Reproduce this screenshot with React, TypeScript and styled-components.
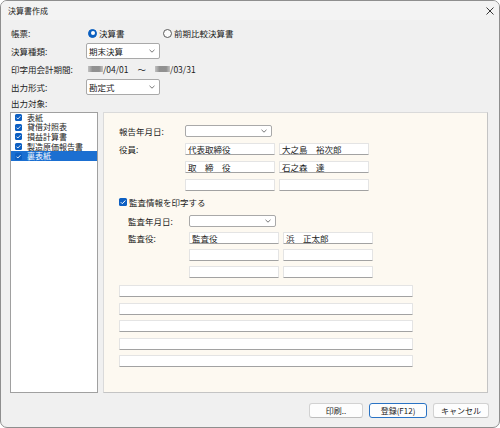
import React from "react";
import styled, { createGlobalStyle } from "styled-components";

const GlobalStyle = createGlobalStyle`
  html, body {
    margin: 0;
    padding: 0;
    background: #ffffff;
  }
  body {
    font-family: "Noto Sans CJK JP", "Noto Sans", sans-serif;
  }
`;

const Window = styled.div`
  width: 500px;
  height: 428px;
  box-sizing: border-box;
  border: 1px solid #8e8e8e;
  border-radius: 7px;
  overflow: hidden;
  background: #f0f0f0;
  color: #1b1b1b;
  font-size: 8.5px;
  line-height: 1;
  display: flex;
  flex-direction: column;
`;

const TitleBar = styled.div`
  height: 19px;
  flex-shrink: 0;
  background: #f3f3f3;
  display: flex;
  align-items: center;
  justify-content: space-between;
  padding: 0 5px 0 7px;
`;

const Title = styled.span`
  font-size: 8px;
  color: #222;
`;

const Body = styled.div`
  flex: 1;
  display: flex;
  flex-direction: column;
  padding: 5px 10px 0 9px;
`;

const FormStack = styled.div`
  display: flex;
  flex-direction: column;
  gap: 2px;
`;

const FormRow = styled.div<{ $h: number }>`
  height: ${(p) => p.$h}px;
  display: flex;
  align-items: center;
`;

const FieldLabel = styled.span<{ $w: number }>`
  width: ${(p) => p.$w}px;
  flex-shrink: 0;
  box-sizing: border-box;
  padding-left: 1px;
`;

const RadioOption = styled.label<{ $w?: number }>`
  display: inline-flex;
  align-items: center;
  gap: 2px;
  width: ${(p) => (p.$w ? `${p.$w}px` : "auto")};
  margin-left: 2px;
`;

const RadioDot = styled.span<{ $on?: boolean }>`
  width: 9px;
  height: 9px;
  box-sizing: border-box;
  border-radius: 50%;
  position: relative;
  background: ${(p) => (p.$on ? "#0a5fc0" : "#fbfbfb")};
  border: 1px solid ${(p) => (p.$on ? "#0a5fc0" : "#5a5a5a")};
  &::after {
    content: "";
    display: ${(p) => (p.$on ? "block" : "none")};
    position: absolute;
    left: 50%;
    top: 50%;
    width: 4px;
    height: 4px;
    margin: -2px 0 0 -2px;
    border-radius: 50%;
    background: #ffffff;
  }
`;

const Select = styled.div<{ $w: number; $h: number }>`
  width: ${(p) => p.$w}px;
  height: ${(p) => p.$h}px;
  box-sizing: border-box;
  border: 1px solid #a9a9a9;
  border-radius: 2px;
  background: #ffffff;
  display: flex;
  align-items: center;
  justify-content: space-between;
  padding: 0 4px 0 2px;
`;

const Mask = styled.span`
  display: inline-block;
  width: 15px;
  height: 6px;
  margin-left: 2px;
  background: linear-gradient(90deg, #bdbdbd 0%, #868686 30%, #868686 75%, #bdbdbd 100%);
  opacity: 0.9;
`;

const Tilde = styled.span`
  margin: 0 7px 0 9px;
`;

const Main = styled.div`
  margin-top: 2px;
  margin-right: 1px;
  height: 281px;
  display: flex;
  gap: 5px;
`;

const ListBox = styled.div`
  width: 88px;
  box-sizing: border-box;
  border: 1px solid #a0a0a0;
  background: #ffffff;
`;

const ListItem = styled.div<{ $selected?: boolean }>`
  height: 9.6px;
  display: flex;
  align-items: center;
  gap: 5px;
  padding-left: 4px;
  font-size: 8px;
  background: ${(p) => (p.$selected ? "#1b6fd1" : "transparent")};
  color: ${(p) => (p.$selected ? "#ffffff" : "#1b1b1b")};
`;

const CheckBox = styled.span<{ $size: number }>`
  width: ${(p) => p.$size}px;
  height: ${(p) => p.$size}px;
  flex-shrink: 0;
  border-radius: 1.5px;
  background: #0d5fc2;
  display: inline-flex;
  align-items: center;
  justify-content: center;
`;

const Panel = styled.div`
  flex: 1;
  box-sizing: border-box;
  border: 1px solid #dadada;
  border-right-color: #c4c4c4;
  border-bottom-color: #c4c4c4;
  background: #fdf9f1;
  padding: 12px 0 0 15px;
  display: flex;
  flex-direction: column;
`;

const FieldGrid = styled.div<{ $label: number; $rowGap: number; $indent?: number }>`
  display: grid;
  grid-template-columns: ${(p) => p.$label}px 90px 90px;
  grid-auto-rows: 12px;
  column-gap: 4px;
  row-gap: ${(p) => p.$rowGap}px;
  padding-left: ${(p) => p.$indent ?? 0}px;
  align-items: center;
`;

const GridLabel = styled.span<{ $row: number }>`
  grid-column: 1;
  grid-row: ${(p) => p.$row};
`;

const TextBox = styled.div<{ $col?: number }>`
  grid-column: ${(p) => p.$col ?? "auto"};
  height: 12px;
  box-sizing: border-box;
  background: #ffffff;
  border: 1px solid #e4e4e4;
  border-bottom-color: #a2a2a2;
  border-radius: 1px;
  padding-left: 2px;
  display: flex;
  align-items: center;
  white-space: pre;
`;

const CheckRow = styled.label`
  margin-top: 5px;
  height: 12px;
  display: flex;
  align-items: center;
  gap: 2px;
`;

const AuditBlock = styled.div`
  margin-top: 7px;
`;

const WideStack = styled.div`
  margin-top: 7px;
  width: 294px;
  display: flex;
  flex-direction: column;
  gap: 5.5px;
`;

const Footer = styled.div`
  margin-top: 10px;
  display: flex;
  justify-content: flex-end;
  gap: 6px;
`;

const Button = styled.button<{ $w: number; $primary?: boolean }>`
  width: ${(p) => p.$w}px;
  height: 15px;
  box-sizing: border-box;
  padding: 0;
  font: inherit;
  font-size: 8px;
  color: #1b1b1b;
  background: #fdfdfd;
  border: 1px solid ${(p) => (p.$primary ? "#2a73c4" : "#d2d2d2")};
  border-bottom-color: ${(p) => (p.$primary ? "#2a73c4" : "#bdbdbd")};
  border-radius: 3px;
  display: flex;
  align-items: center;
  justify-content: center;
`;

const Chevron = () => (
  <svg width="6" height="4" viewBox="0 0 6 4">
    <polyline points="0.5,0.8 3,3.2 5.5,0.8" fill="none" stroke="#555" strokeWidth="0.8" />
  </svg>
);

const Check = ({ size }: { size: number }) => (
  <CheckBox $size={size}>
    <svg width={size} height={size} viewBox="0 0 8 8">
      <polyline points="1.8,4.2 3.3,5.7 6.3,2.5" fill="none" stroke="#fff" strokeWidth="1" />
    </svg>
  </CheckBox>
);

const listItems = ["表紙", "貸借対照表", "損益計算書", "製造原価報告書", "裏表紙"];

export default function App() {
  return (
    <>
      <GlobalStyle />
      <Window>
        <TitleBar>
          <Title>決算書作成</Title>
          <svg width="8" height="8" viewBox="0 0 8 8">
            <path d="M0.5 0.5 L7.5 7.5 M7.5 0.5 L0.5 7.5" stroke="#222" strokeWidth="0.9" />
          </svg>
        </TitleBar>
        <Body>
          <FormStack>
            <FormRow $h={16}>
              <FieldLabel $w={76}>帳票:</FieldLabel>
              <RadioOption $w={73}>
                <RadioDot $on />
                決算書
              </RadioOption>
              <RadioOption>
                <RadioDot />
                前期比較決算書
              </RadioOption>
            </FormRow>
            <FormRow $h={16}>
              <FieldLabel $w={76}>決算種類:</FieldLabel>
              <Select $w={74} $h={16}>
                期末決算
                <Chevron />
              </Select>
            </FormRow>
            <FormRow $h={16}>
              <FieldLabel $w={76}>印字用会計期間:</FieldLabel>
              <Mask />
              <span>/04/01</span>
              <Tilde>〜</Tilde>
              <Mask />
              <span>/03/31</span>
            </FormRow>
            <FormRow $h={16}>
              <FieldLabel $w={76}>出力形式:</FieldLabel>
              <Select $w={74} $h={16}>
                勘定式
                <Chevron />
              </Select>
            </FormRow>
            <FormRow $h={13}>
              <FieldLabel $w={76}>出力対象:</FieldLabel>
            </FormRow>
          </FormStack>

          <Main>
            <ListBox>
              {listItems.map((item, i) => (
                <ListItem key={item} $selected={i === listItems.length - 1}>
                  <Check size={7} />
                  {item}
                </ListItem>
              ))}
            </ListBox>

            <Panel>
              <FieldGrid $label={62} $rowGap={6}>
                <GridLabel $row={1}>報告年月日:</GridLabel>
                <Select $w={87} $h={12}>
                  <span />
                  <Chevron />
                </Select>
                <span />
                <GridLabel $row={2}>役員:</GridLabel>
                <TextBox $col={2}>代表取締役</TextBox>
                <TextBox $col={3}>大之島　裕次郎</TextBox>
                <TextBox $col={2}>取　締　役</TextBox>
                <TextBox $col={3}>石之森　達</TextBox>
                <TextBox $col={2} />
                <TextBox $col={3} />
              </FieldGrid>

              <CheckRow>
                <Check size={8} />
                監査情報を印字する
              </CheckRow>

              <AuditBlock>
                <FieldGrid $label={57} $rowGap={5} $indent={9}>
                  <GridLabel $row={1}>監査年月日:</GridLabel>
                  <Select $w={87} $h={12}>
                    <span />
                    <Chevron />
                  </Select>
                  <span />
                  <GridLabel $row={2}>監査役:</GridLabel>
                  <TextBox $col={2}>監査役</TextBox>
                  <TextBox $col={3}>浜　正太郎</TextBox>
                  <TextBox $col={2} />
                  <TextBox $col={3} />
                  <TextBox $col={2} />
                  <TextBox $col={3} />
                </FieldGrid>
              </AuditBlock>

              <WideStack>
                {[0, 1, 2, 3, 4].map((n) => (
                  <TextBox key={n} />
                ))}
              </WideStack>
            </Panel>
          </Main>

          <Footer>
            <Button $w={54}>印刷..</Button>
            <Button $w={58} $primary>
              登録(F12)
            </Button>
            <Button $w={56}>キャンセル</Button>
          </Footer>
        </Body>
      </Window>
    </>
  );
}
